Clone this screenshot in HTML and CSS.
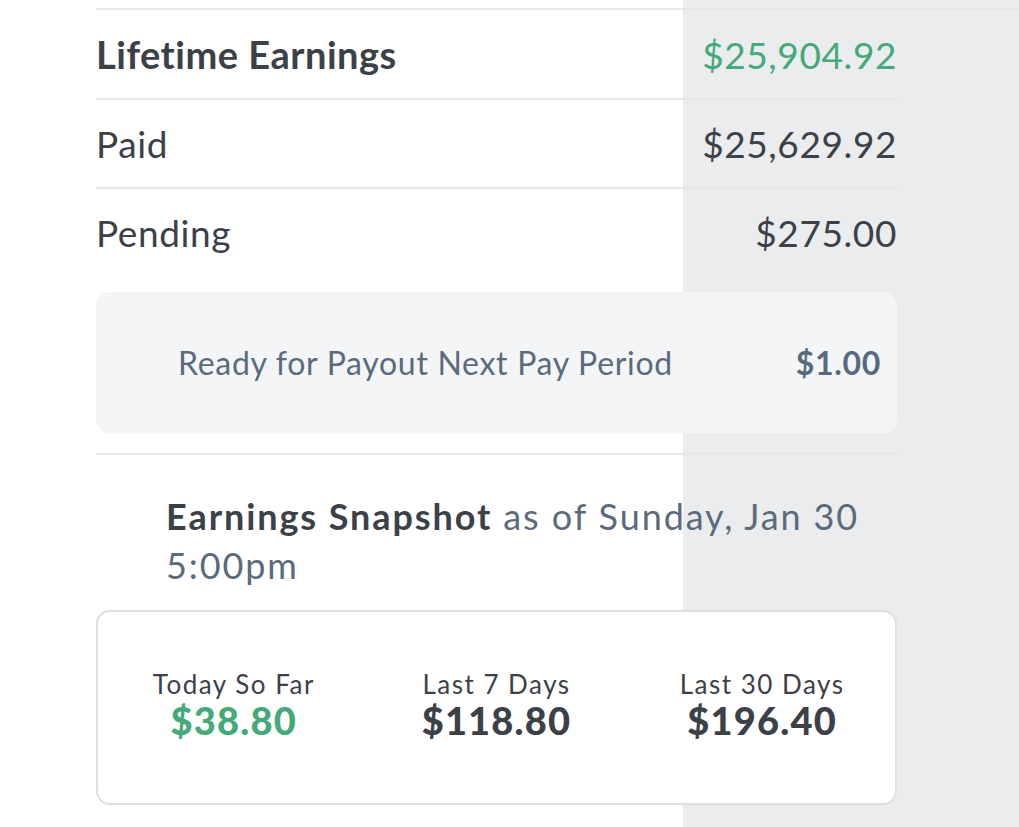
FILE: index.html
```html
<!DOCTYPE html>
<html lang="en">
<head>
    <meta charset="UTF-8">
    <title>Earnings</title>
    <link rel="stylesheet" href="styles.css">
</head>
<body>
    <div class="earnings">
        <div class="rule-wide"></div>
        <div class="row row-total">
            <span class="label">Lifetime Earnings</span>
            <span class="amount green">$25,904.92</span>
        </div>
        <div class="row">
            <span class="label">Paid</span>
            <span class="amount">$25,629.92</span>
        </div>
        <div class="row">
            <span class="label">Pending</span>
            <span class="amount">$275.00</span>
        </div>

        <div class="payout">
            <span>Ready for Payout Next Pay Period</span>
            <strong>$1.00</strong>
        </div>

        <div class="snapshot">
            <p><b>Earnings Snapshot</b> as of Sunday, Jan 30 5:00pm</p>
        </div>

        <div class="stats">
            <div class="stat">
                <span>Today So Far</span>
                <strong class="green">$38.80</strong>
            </div>
            <div class="stat">
                <span>Last 7 Days</span>
                <strong>$118.80</strong>
            </div>
            <div class="stat">
                <span>Last 30 Days</span>
                <strong>$196.40</strong>
            </div>
        </div>
    </div>
</body>
</html>
```
FILE: styles.css
```css
html, body {
    margin: 0;
    height: 100%;
    overflow: hidden;
}
body {
    font-family: Lato, "Open Sans", sans-serif;
    color: #3c4148;
    background: linear-gradient(to right, #ffffff 683px, #ebecee 683px);
}
.earnings {
    width: 801px;
    margin-left: 96px;
    padding-top: 8px;
}
.rule-wide {
    margin-right: -122px;
    border-top: 2px solid #e6e7e9;
}
.row {
    display: flex;
    justify-content: space-between;
    align-items: center;
    height: 87px;
    border-top: 2px solid #e6e7e9;
    font-size: 37px;
    letter-spacing: 0.6px;
}
.row-total {
    height: 88px;
    border-top: none;
}
.row-total .label {
    font-weight: bold;
    font-size: 38px;
    letter-spacing: 0.5px;
}
.green {
    color: #45a979;
}
.payout {
    margin-top: 16px;
    height: 141px;
    display: flex;
    justify-content: space-between;
    align-items: center;
    padding: 0 16px 0 82px;
    background: #f4f5f7;
    border-radius: 14px;
    color: #5a6b7c;
    font-size: 32px;
    letter-spacing: 0.7px;
}
.payout strong {
    color: #566a7e;
}
.snapshot {
    margin-top: 20px;
    border-top: 2px solid #e6e7e9;
    padding: 37px 21px 20px 70px;
}
.snapshot p {
    margin: 0;
    font-size: 36px;
    line-height: 49px;
    letter-spacing: 1.9px;
    color: #5b6b7c;
}
.snapshot b {
    color: #3c4148;
}
.stats {
    display: grid;
    grid-template-columns: 1fr 1fr 1fr;
    align-items: center;
    box-sizing: border-box;
    height: 195px;
    padding-bottom: 8px;
    border: 2px solid #dcdfe3;
    border-radius: 14px;
    background: #ffffff;
}
.stat {
    display: flex;
    flex-direction: column;
    align-items: center;
}
.stat span {
    font-size: 26px;
    line-height: 32px;
    letter-spacing: 1.5px;
}
.stat strong {
    font-size: 38px;
    line-height: 40px;
    font-weight: 900;
    letter-spacing: 1.2px;
}
.stat:first-child {
    padding-left: 6px;
}
```
